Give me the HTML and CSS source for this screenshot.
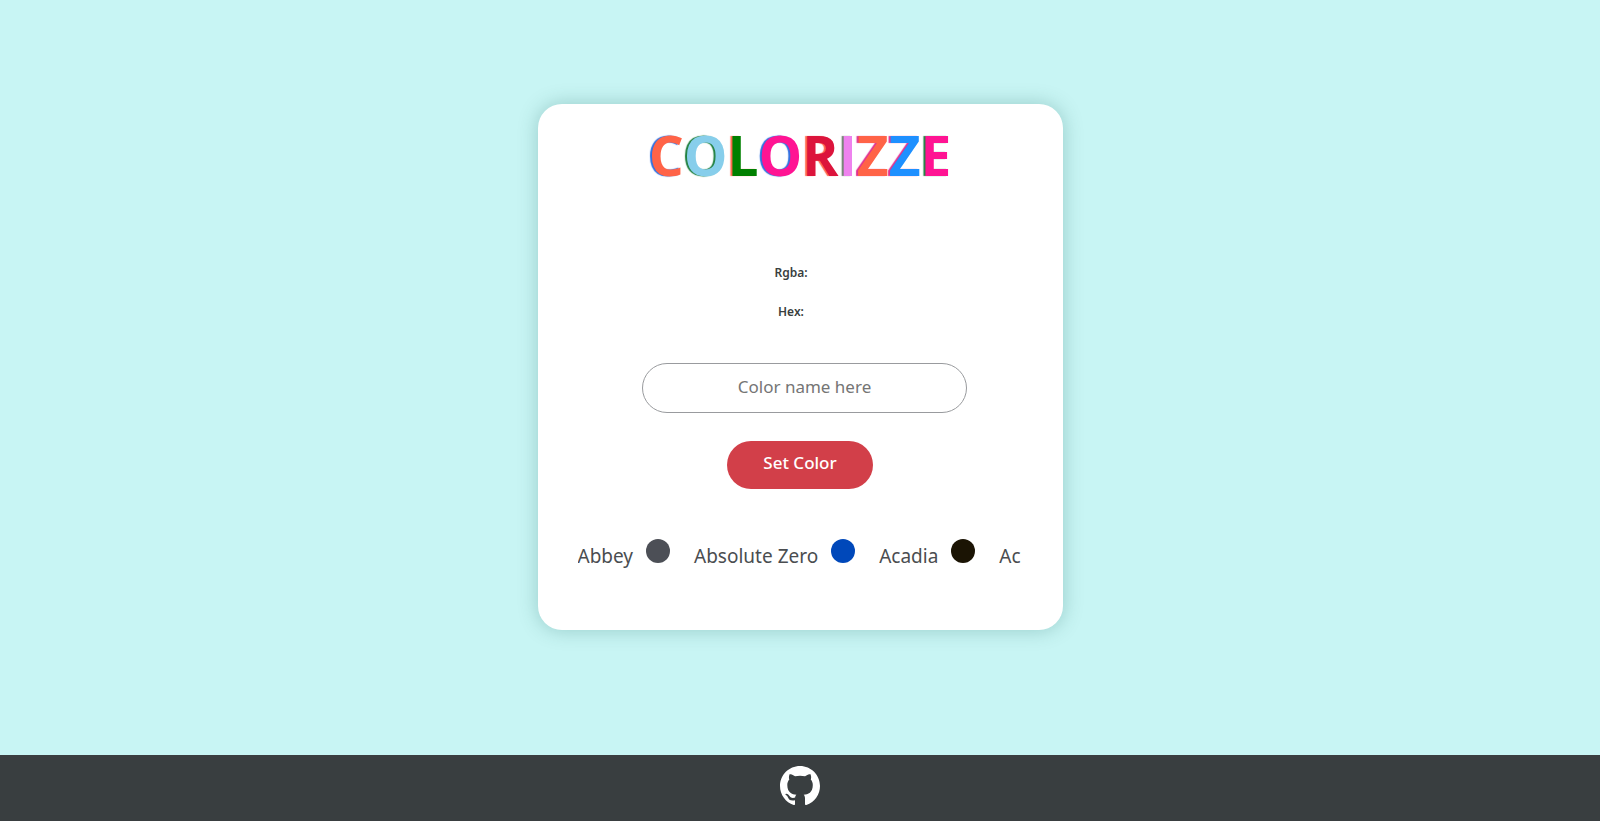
FILE: index.html
```html
<!DOCTYPE html>
<html lang="en">
<head>
<meta charset="utf-8">
<title>Colorizze</title>
<link rel="stylesheet" href="styles.css">
</head>
<body>
<main class="stage">
  <section class="card">
    <h1 class="title"><span class="tomato on-blue">C</span><span class="sky on-green">O</span><span class="green on-tomato">L</span><span class="pink on-blue">O</span><span class="crimson on-tomato">R</span><span class="violet on-gray">I</span><span class="tomato on-pink">Z</span><span class="blue on-pink">Z</span><span class="pink on-green">E</span></h1>
    <div class="values">
      <p>Rgba:</p>
      <p>Hex:</p>
    </div>
    <form class="picker">
      <input class="name" type="text" placeholder="Color name here" aria-label="Color name">
      <button class="submit" type="button">Set Color</button>
    </form>
    <ul class="swatches">
      <li>Abbey <i class="dot abbey"></i></li>
      <li>Absolute Zero <i class="dot zero"></i></li>
      <li>Acadia <i class="dot acadia"></i></li>
      <li>Ac</li>
    </ul>
  </section>
</main>
<footer class="footer">
  <a href="#" aria-label="GitHub"><svg class="github" viewBox="0 0 16 16" aria-hidden="true"><path fill="currentColor" d="M8 0C3.58 0 0 3.58 0 8c0 3.54 2.29 6.53 5.47 7.59.4.07.55-.17.55-.38 0-.19-.01-.82-.01-1.49-2.01.37-2.53-.49-2.69-.94-.09-.23-.48-.94-.82-1.13-.28-.15-.68-.52-.01-.53.63-.01 1.08.58 1.23.82.72 1.21 1.87.87 2.33.66.07-.52.28-.87.51-1.07-1.78-.2-3.64-.89-3.64-3.95 0-.87.31-1.59.82-2.15-.08-.2-.36-1.02.08-2.12 0 0 .67-.21 2.2.82.64-.18 1.32-.27 2-.27s1.36.09 2 .27c1.53-1.04 2.2-.82 2.2-.82.44 1.1.16 1.92.08 2.12.51.56.82 1.27.82 2.15 0 3.07-1.87 3.75-3.65 3.95.29.25.54.73.54 1.48 0 1.07-.01 1.93-.01 2.2 0 .21.15.46.55.38A8.01 8.01 0 0 0 16 8c0-4.42-3.58-8-8-8z"/></svg></a>
</footer>
</body>
</html>
```
FILE: styles.css
```css
* { box-sizing: border-box; }
body {
  margin: 0;
  min-height: 100vh;
  display: flex;
  flex-direction: column;
  background: #c8f5f4;
  color: #393e40;
  font-family: "Noto Sans", sans-serif;
}
.stage {
  flex: 1;
  display: flex;
  justify-content: center;
  align-items: flex-start;
  padding: 104px 16px 24px;
}
.card {
  width: 100%;
  max-width: 525px;
  padding: 20px 40px 56px;
  display: flex;
  flex-direction: column;
  align-items: center;
  background: #fff;
  border-radius: 24px;
  box-shadow: 0 0 20px rgba(0, 80, 70, 0.25);
}
.title {
  margin: 0;
  display: flex;
  font: 700 55px/62px "Open Sans", "Noto Sans", sans-serif;
}
.tomato { color: #ff6347; }
.sky { color: #87ceeb; }
.green { color: #008000; }
.pink { color: #ff1493; }
.crimson { color: #dc143c; }
.violet { color: #ee82ee; }
.blue { color: #1e90ff; }
.on-blue { text-shadow: -2px 0 1px #3070e0; }
.on-green { text-shadow: -2px 0 1px #208040; }
.on-tomato { text-shadow: -2px 0 1px #ff6347; }
.on-gray { text-shadow: -2px 0 1px #708070; }
.on-pink { text-shadow: -2px 0 1px #e03090; }
.values {
  margin: 78px 18px 0 0;
  display: grid;
  gap: 21px;
  text-align: center;
  font-size: 12px;
  font-weight: 600;
  line-height: 18px;
}
.values p { margin: 0; }
.picker {
  width: 100%;
  margin-top: 42px;
  display: flex;
  flex-direction: column;
  align-items: center;
  gap: 28px;
}
.name {
  width: 73%;
  height: 50px;
  margin-left: 9px;
  padding: 0 16px 3px;
  border: 1px solid #999b9e;
  border-radius: 25px;
  background: #fff;
  text-align: center;
  font: 17px/24px "Noto Sans", sans-serif;
}
.name::placeholder { color: #757575; }
.submit {
  height: 48px;
  padding: 0 36px 4px;
  border: 0;
  border-radius: 24px;
  background: #d23f49;
  color: #fff;
  font: 500 17px/24px "Noto Sans", sans-serif;
}
.swatches {
  width: 100%;
  margin: 49px 0 0;
  padding: 0;
  display: flex;
  gap: 24px;
  overflow: hidden;
  list-style: none;
  white-space: nowrap;
  color: #4a4d50;
  font-size: 19px;
  line-height: 36px;
}
.swatches li {
  display: flex;
  align-items: baseline;
  gap: 13px;
}
.dot {
  width: 24px;
  height: 24px;
  border-radius: 50%;
}
.abbey { background: #4c4f56; }
.zero { background: #0048ba; }
.acadia { background: #1b1404; }
.footer {
  height: 66px;
  padding-bottom: 4px;
  display: flex;
  justify-content: center;
  align-items: center;
  background: #393e40;
}
.footer a { display: flex; color: #fff; }
.github { width: 40px; height: 40px; }
```
